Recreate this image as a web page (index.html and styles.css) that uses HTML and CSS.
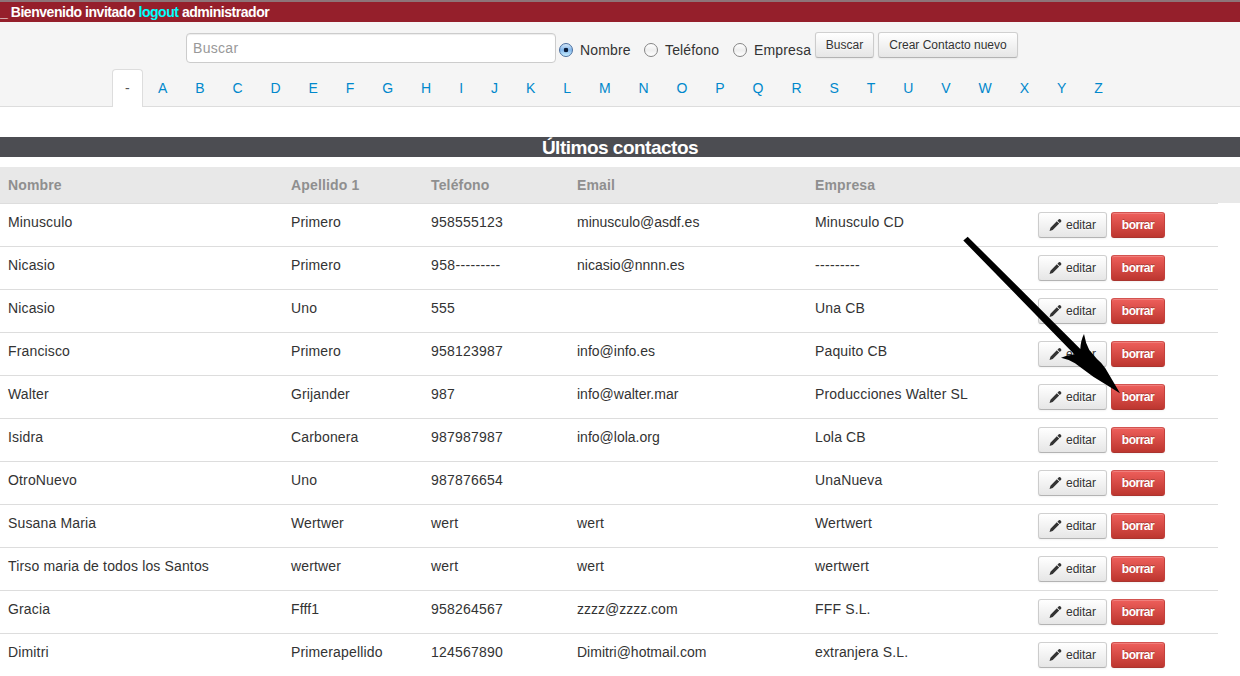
FILE: index.html
```html
<!DOCTYPE html>
<html lang="es">
<head>
<meta charset="utf-8">
<title>Contactos</title>
<link rel="stylesheet" href="styles.css">
</head>
<body>
<svg class="defs" width="0" height="0" aria-hidden="true"><symbol id="pencil" viewBox="0 0 14 14"><path d="M.6 13.400l1-3.400L8.400 3l2.600 2.500L4 12.400zM9.100 2.300l1.500-1.500q.8-.5 1.600.1l.9.9q.6.800 0 1.600l-1.400 1.400z"/></symbol></svg>
<header class="top">
<div class="userbar">_ Bienvenido invitado <a href="#">logout</a> administrador</div>
<form class="search">
<input class="query" type="text" placeholder="Buscar">
<label class="opt nombre"><input type="radio" name="campo" checked><span>Nombre</span></label>
<label class="opt telefono"><input type="radio" name="campo"><span>Teléfono</span></label>
<label class="opt empresa"><input type="radio" name="campo"><span>Empresa</span></label>
<button type="button" class="btn find">Buscar</button>
<button type="button" class="btn create">Crear Contacto nuevo</button>
</form>
<nav class="tabs"><a class="active">-</a><a>A</a><a>B</a><a>C</a><a>D</a><a>E</a><a>F</a><a>G</a><a>H</a><a>I</a><a>J</a><a>K</a><a>L</a><a>M</a><a>N</a><a>O</a><a>P</a><a>Q</a><a>R</a><a>S</a><a>T</a><a>U</a><a>V</a><a>W</a><a>X</a><a>Y</a><a>Z</a></nav>
</header>
<h1 class="title">Últimos contactos</h1>
<main class="contacts">
<div class="row head"><span>Nombre</span><span>Apellido 1</span><span>Teléfono</span><span>Email</span><span>Empresa</span></div>
<div class="row"><span>Minusculo</span><span>Primero</span><span class="phone">958555123</span><span class="email">minusculo@asdf.es</span><span>Minusculo CD</span><div class="actions"><button class="btn edit"><svg><use href="#pencil"/></svg>editar</button><button class="btn danger">borrar</button></div></div>
<div class="row"><span>Nicasio</span><span>Primero</span><span class="phone dashed">958---------</span><span class="email">nicasio@nnnn.es</span><span class="dashed">---------</span><div class="actions"><button class="btn edit"><svg><use href="#pencil"/></svg>editar</button><button class="btn danger">borrar</button></div></div>
<div class="row"><span>Nicasio</span><span>Uno</span><span class="phone">555</span><span></span><span>Una CB</span><div class="actions"><button class="btn edit"><svg><use href="#pencil"/></svg>editar</button><button class="btn danger">borrar</button></div></div>
<div class="row"><span>Francisco</span><span>Primero</span><span class="phone">958123987</span><span class="email">info@info.es</span><span>Paquito CB</span><div class="actions"><button class="btn edit"><svg><use href="#pencil"/></svg>editar</button><button class="btn danger">borrar</button></div></div>
<div class="row"><span>Walter</span><span>Grijander</span><span class="phone">987</span><span class="email">info@walter.mar</span><span>Producciones Walter SL</span><div class="actions"><button class="btn edit"><svg><use href="#pencil"/></svg>editar</button><button class="btn danger">borrar</button></div></div>
<div class="row"><span>Isidra</span><span>Carbonera</span><span class="phone">987987987</span><span class="email">info@lola.org</span><span>Lola CB</span><div class="actions"><button class="btn edit"><svg><use href="#pencil"/></svg>editar</button><button class="btn danger">borrar</button></div></div>
<div class="row"><span>OtroNuevo</span><span>Uno</span><span class="phone">987876654</span><span></span><span>UnaNueva</span><div class="actions"><button class="btn edit"><svg><use href="#pencil"/></svg>editar</button><button class="btn danger">borrar</button></div></div>
<div class="row"><span>Susana Maria</span><span>Wertwer</span><span class="phone">wert</span><span>wert</span><span>Wertwert</span><div class="actions"><button class="btn edit"><svg><use href="#pencil"/></svg>editar</button><button class="btn danger">borrar</button></div></div>
<div class="row"><span>Tirso maria de todos los Santos</span><span>wertwer</span><span class="phone">wert</span><span>wert</span><span>wertwert</span><div class="actions"><button class="btn edit"><svg><use href="#pencil"/></svg>editar</button><button class="btn danger">borrar</button></div></div>
<div class="row"><span>Gracia</span><span>Ffff1</span><span class="phone">958264567</span><span class="email">zzzz@zzzz.com</span><span>FFF S.L.</span><div class="actions"><button class="btn edit"><svg><use href="#pencil"/></svg>editar</button><button class="btn danger">borrar</button></div></div>
<div class="row"><span>Dimitri</span><span>Primerapellido</span><span class="phone">124567890</span><span class="email">Dimitri@hotmail.com</span><span>extranjera S.L.</span><div class="actions"><button class="btn edit"><svg><use href="#pencil"/></svg>editar</button><button class="btn danger">borrar</button></div></div>
</main>
<svg class="arrow" width="170" height="200" viewBox="0 0 170 200"><path d="M3.300 40.500L7.700 36.700L120.300 149Q120.800 140 124 134Q125.500 143 129.300 150L137 159Q142 163 145.500 168.500L160 193.300L133.300 176.700L115 163.300Q108 159 101 157.700Q107 155 114.500 154.500Z"/></svg>
</body>
</html>
```
FILE: styles.css
```css
* { box-sizing: border-box; }
body { margin: 0; width: 1240px; height: 676px; overflow: hidden; background: #fff; color: #333; font: 14px/20px "Liberation Sans", Arial, sans-serif; letter-spacing: .15px; }
.defs { position: absolute; }
.top { height: 107px; background: #f5f5f5; border-bottom: 1px solid #ddd; display: flex; flex-direction: column; }
.userbar { height: 22px; flex: none; border-top: 2px solid #8e7478; background: #951f2b; color: #fff; font-weight: bold; letter-spacing: -.46px; white-space: nowrap; }
.userbar a { color: #0ff; text-decoration: none; }
.search { height: 47px; flex: none; padding: 10px 0 0 186px; display: flex; align-items: flex-start; }
.query { width: 370px; height: 30px; margin: 1px 3px 0 0; padding: 4px 6px; border: 1px solid #ccc; border-radius: 4px; font: inherit; letter-spacing: .3px; box-shadow: inset 0 1px 1px rgba(0,0,0,.075); }
.query::placeholder { color: #999; opacity: 1; }
.opt { display: flex; align-items: center; height: 20px; margin-top: 8px; white-space: nowrap; }
.nombre { width: 85px; }
.telefono { width: 89px; }
.empresa { width: 82px; }
.opt input { appearance: none; width: 14px; height: 14px; margin: 0 7px 0 0; flex: none; border: 1px solid #858585; border-radius: 50%; background: linear-gradient(#fff, #eee 50%, #fff); }
.opt input:checked { border-color: #4a6f9f; background: radial-gradient(circle, #0b1d3a 2px, transparent 2.6px), linear-gradient(#d5e7f8, #82b7ec 50%, #c9efff); }
.btn { height: 26px; padding: 3px 10px 2px; border: 1px solid #ccc; border-color: #d0d0d0 #ccc #b3b3b3; border-radius: 3px; background: linear-gradient(#fff, #e6e6e6); color: #333; font: 12px/19px "Liberation Sans", Arial, sans-serif; white-space: nowrap; box-shadow: inset 0 1px 0 rgba(255,255,255,.2), 0 1px 2px rgba(0,0,0,.05); text-shadow: 0 1px 1px rgba(255,255,255,.75); display: flex; align-items: center; justify-content: center; }
.find { width: 59px; margin-right: 4px; }
.create { width: 140px; }
.tabs { display: flex; flex: none; height: 38px; padding-left: 112px; }
.tabs a { height: 38px; padding: 8px 12px; margin-right: 1.93px; border: 1px solid transparent; border-bottom: 0; color: #08c; letter-spacing: 0; }
.tabs .active { width: 31px; background: #fff; color: #555; border-color: #ddd; border-radius: 4px 4px 0 0; }
.title { height: 20px; margin: 30px 0 10px; background: #4c4d52; color: #fff; font-size: 19px; line-height: 22px; text-align: center; letter-spacing: -.5px; }
.row { width: 1218px; height: 43px; padding: 8px 0 0 8px; display: grid; grid-template-columns: 283px 140px 146px 238px 223px 1fr; align-items: start; border-top: 1px solid #ddd; white-space: nowrap; }
.row.head { width: 1240px; height: 36px; border: 0; background: #e8e8e8; color: #8f8f8f; font-weight: bold; }
.phone { letter-spacing: .2px; }
.email { letter-spacing: 0; }
.dashed { letter-spacing: .35px; }
.actions { display: flex; gap: 4px; }
.edit { width: 69px; gap: 4px; }
.edit svg { width: 13px; height: 14px; margin-bottom: 2px; fill: #333; }
.danger { width: 54px; color: #fff; font-weight: bold; letter-spacing: -.5px; border-color: #d25350 #c4403b #aa342f; background: linear-gradient(#ee5f5b, #bd362f); text-shadow: 0 -1px 0 rgba(0,0,0,.25); }
.arrow { position: absolute; left: 960px; top: 200px; pointer-events: none; }
```
